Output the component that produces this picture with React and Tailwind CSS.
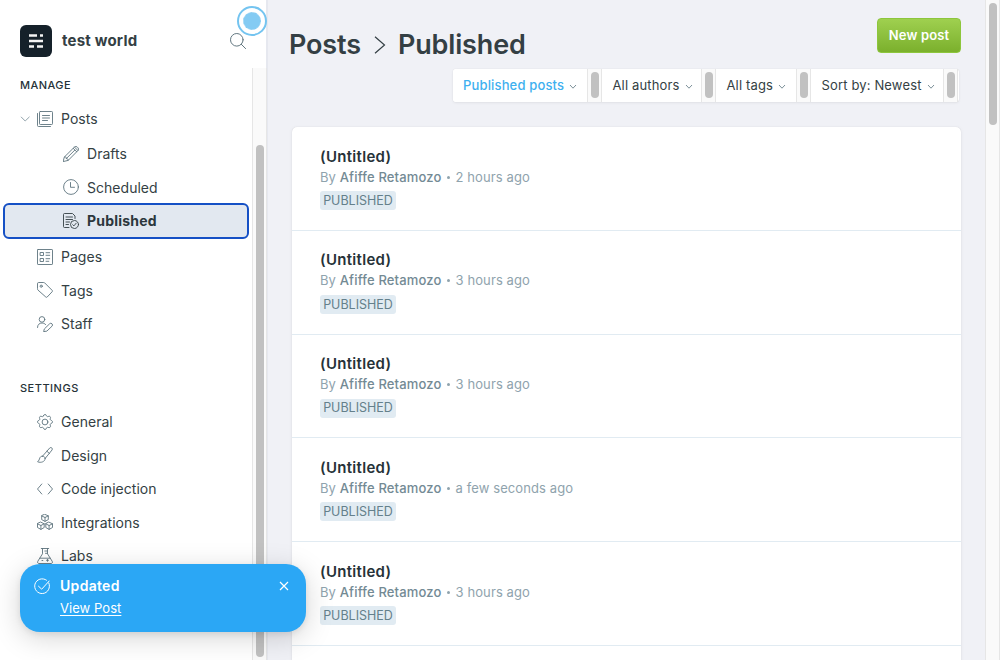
import React from 'react';

function Icon({ children, size = 'size-4', className = 'text-[#5d747e]', sw = 0.9 }) {
  return (
    <svg
      viewBox="0 0 16 16"
      className={`${size} shrink-0 ${className}`}
      fill="none"
      stroke="currentColor"
      strokeWidth={sw}
      strokeLinecap="round"
      strokeLinejoin="round"
    >
      {children}
    </svg>
  );
}

const icons = {
  posts: (
    <>
      <rect x="2.5" y="0.5" width="13" height="13" rx="0.8" />
      <path d="M0.5 2.5v12a1 1 0 0 0 1 1h12M5.5 4.5h7M5.5 7h7M5.5 9.500h5" />
    </>
  ),
  drafts: (
    <>
      <path d="M1.6 10.8 11.4 1.1a2 2 0 0 1 2.9 0l.6.6a2 2 0 0 1 0 2.9L5.2 14.4.5 15.5z" />
      <path d="m10.2 2.3 3.5 3.5M11.5 1.1l3.5 3.5M1.6 10.8c1.2-.2 1.9.5 1.7 1.8 1.2-.2 2 .6 1.9 1.8M3.3 12.6l8.4-8.4" />
    </>
  ),
  scheduled: (
    <>
      <circle cx="8" cy="8" r="7.4" />
      <path d="M7.5 3.5v4.8h4" />
    </>
  ),
  published: (
    <>
      <path d="M6 14.500H1.500a1 1 0 0 1-1-1v-12a1 1 0 0 1 1-1h8l2.500 2.500V5.500M3 4h6.500M3 6.500h6.500M3 9h3.500M3 11.500h2.500" />
      <circle cx="11.500" cy="11.500" r="4" />
      <path d="m9.700 11.700 1.200 1.200 2.300-2.700" />
    </>
  ),
  pages: (
    <>
      <rect x="0.5" y="0.5" width="15" height="15" rx="0.6" />
      <path d="M3.500 3.500h3v3h-3zM3.500 9.500h3v3h-3zM9 3.700h3.700M9 6.300h3.700M9 9.700h3.700M9 12.300h2.800" />
    </>
  ),
  tags: (
    <>
      <path d="M.5 1.500a1 1 0 0 1 1-1h5.200a1.500 1.500 0 0 1 1 .4l7.500 7.500a1 1 0 0 1 0 1.300l-5 5.300a1 1 0 0 1-1.400 0L.9 8a1.400 1.400 0 0 1-.4-1z" />
      <circle cx="4.200" cy="4.200" r="1.100" />
    </>
  ),
  staff: (
    <>
      <circle cx="5" cy="3.400" r="2.800" />
      <path d="M.5 11.500C.5 8.500 2.500 7 5 7c1.700 0 2.900.6 3.700 1.700M7.600 12.700l5-4.900a1.650 1.650 0 0 1 2.400 2.400l-5.100 4.900-2.900.5z" />
    </>
  ),
  general: (
    <>
      <path d="M6.500 1.800C6.800.9 7.200.5 8 .5s1.200.4 1.500 1.300c.3.700.9 1 1.600.7.900-.4 1.500-.4 2 .1s.6 1.200.2 2c-.3.700 0 1.400.7 1.700.9.300 1.500.8 1.500 1.600s-.5 1.300-1.400 1.600c-.8.300-1.100 1-.8 1.700.4.900.3 1.500-.2 2s-1.200.6-2 .2c-.7-.3-1.400 0-1.600.7-.3.900-.7 1.400-1.500 1.400s-1.200-.5-1.500-1.400c-.3-.7-.9-1-1.600-.7-.9.400-1.500.3-2-.2s-.6-1.100-.2-2c.3-.700 0-1.400-.7-1.700C1 9.200.5 8.700.5 7.900s.5-1.300 1.400-1.600c.8-.300 1.100-1 .8-1.700-.4-.800-.3-1.500.2-2s1.100-.5 2-.1c.700.300 1.300 0 1.600-.7z" />
      <circle cx="8" cy="8" r="2.900" />
    </>
  ),
  design: (
    <>
      <path d="M5.500 9.200 12.800.900c1.300-1.200 3.200.5 2.300 2L8.200 11.400" />
      <path d="M5.500 9.200c1.600 0 2.700 1 2.700 2.200M10 4.300l2.500 2.200M5.500 9.200C2 8.800 3.300 12.700.6 14.800c3.300 1.300 7.600.1 7.600-3.400" />
    </>
  ),
  code: <path d="M4.800 3 .5 8l4.300 5M11.200 3l4.300 5-4.300 5" />,
  integrations: (
    <>
      <path d="m8 .4 3.300 1.500v3.700L8 7.400 4.700 5.600V1.900zM4.700 1.900 8 3.500l3.300-1.600M8 3.500v3.900" />
      <path d="m3.900 8.200 3.300 1.600v3.700l-3.300 1.900-3.400-1.900V9.800zM.5 9.800l3.400 1.700 3.300-1.700M3.900 11.500v3.900" />
      <path d="m12.100 8.200 3.400 1.600v3.700l-3.400 1.900-3.300-1.900V9.800zM8.800 9.800l3.300 1.700 3.400-1.700M12.100 11.500v3.900" />
    </>
  ),
  labs: (
    <>
      <path d="M4.300.5h7.400M5.500.5v5.300L.8 13.300c-.700 1.200 0 2.200 1.200 2.200h12c1.200 0 1.900-1 1.200-2.200l-4.700-7.500V.5M2.900 10.200h10.200M7.800 3h2.500M8.500 5.300h2" />
      <path d="M5 12.500h.8M9.500 12.300h2M10.500 11.400v1.900" />
    </>
  ),
};

function NavItem({ icon, label, chevron, nested }) {
  return (
    <a className={`flex h-[33.6px] items-center gap-2 ${nested ? 'pl-[63px]' : chevron ? 'pl-5' : 'pl-[37px]'}`}>
      {chevron && (
        <svg viewBox="0 0 10 6" className="-mr-[1px] h-1.5 w-2.5 shrink-0 fill-none stroke-[#90a2aa]">
          <path d="M1 .8 5.200 5 9.500.8" />
        </svg>
      )}
      <Icon>{icons[icon]}</Icon>
      <span>{label}</span>
    </a>
  );
}

function Track({ className, thumb }) {
  return (
    <div className={`shrink-0 border-x border-[#e6e6e6] bg-[#fafafa] px-[3px] ${className}`}>
      <div className={`w-2 rounded-full bg-[#c1c1c1] ${thumb}`} />
    </div>
  );
}

function Filter({ label, active, width }) {
  return (
    <div className="flex h-[33px]">
      <div className={`flex items-center gap-[5px] bg-white ${width} ${active ? 'rounded-l-[3px] pl-2.5 text-[#3eb0ef] font-medium' : 'pl-[10.500px]'}`}>
        <span className="whitespace-nowrap">{label}</span>
        <svg viewBox="0 0 8 6" className="mt-0.5 h-1.5 w-2 shrink-0 fill-none stroke-[#7c9099]">
          <path d="M1 1l3 3.200L7 1" />
        </svg>
      </div>
      <Track className="w-[15px] pt-[3px]" thumb="h-[26px]" />
    </div>
  );
}

function Post({ time }) {
  return (
    <article className="h-[103.700px] border-b border-[#e1ebf2] pt-[19.500px] pl-7">
      <h3 className="text-[15px] leading-5 font-semibold tracking-[0.3px] text-[#263238]">(Untitled)</h3>
      <p className="mt-px text-[13px] leading-[18px] tracking-[0.1px] text-[#8fa3ad]">
        By <span className="font-medium tracking-[0.16px] text-[#738a94]">Afiffe Retamozo</span>
        <span className="mr-[6px] ml-[5px] inline-block size-[3px] rounded-full bg-[#8fa3ad] align-[3px]" />
        {time}
      </p>
      <span className="mt-[5.500px] flex h-[19px] w-[76px] items-center justify-center rounded-[3px] bg-[#e1ebf2] pt-px text-[12.500px] text-[#64808b]">
        PUBLISHED
      </span>
    </article>
  );
}

export default function App() {
  return (
    <div className="relative flex h-[660px] w-[1000px] overflow-hidden bg-[#f0f1f6] font-['Inter',sans-serif] text-[#343f44]">
      <aside className="flex w-[268px] shrink-0 flex-col border-r-2 border-[#e6e8ef] bg-white">
        <header className="flex h-[68px] shrink-0 items-center pt-[14px] pl-5">
          <svg viewBox="0 0 32 32" className="size-8 shrink-0">
            <rect width="32" height="32" rx="6" fill="#15212a" />
            <path d="M9 10.500h8M20 10.500h3M9 16h14M9 21.500h5M17 21.500h6" stroke="#f4f4f4" strokeWidth="2.600" />
          </svg>
          <h2 className="ml-2.5 w-[168px] text-[15px] font-bold tracking-[0.2px]">test world</h2>
          <Icon sw="1" className="text-[#627780]">
            <circle cx="6.800" cy="6.800" r="6.300" />
            <path d="m11.300 11.300 4.300 4.300" />
          </Icon>
        </header>
        <div className="flex min-h-0 flex-1">
          <nav className="w-[252px] shrink-0 overflow-hidden text-[14px] tracking-[0.03px]">
            <h4 className="flex h-[34px] items-center pl-5 text-[11px] font-medium tracking-[0.45px] text-[#263238]">MANAGE</h4>
            <NavItem icon="posts" label="Posts" chevron />
            <div className="mt-[1.500px]">
              <NavItem icon="drafts" label="Drafts" nested />
              <NavItem icon="scheduled" label="Scheduled" nested />
            </div>
            <a className="mx-[3px] -mt-[1.300px] flex h-9 w-[246px] items-center gap-2 rounded-md border-2 border-[#1550c5] bg-[#e2e8f0] pl-[58px] font-bold tracking-[0.2px] text-[#2c373d]">
              <Icon className="text-[#343f44]">{icons.published}</Icon>
              <span>Published</span>
            </a>
            <div className="mt-px">
              <NavItem icon="pages" label="Pages" />
              <NavItem icon="tags" label="Tags" />
              <NavItem icon="staff" label="Staff" />
            </div>
            <h4 className="mt-[30px] flex h-[34px] items-center pl-5 text-[11px] font-medium tracking-[0.5px] text-[#263238]">SETTINGS</h4>
            <NavItem icon="general" label="General" />
            <NavItem icon="design" label="Design" />
            <NavItem icon="code" label="Code injection" />
            <NavItem icon="integrations" label="Integrations" />
            <NavItem icon="labs" label="Labs" />
          </nav>
          <Track className="w-[15px] pt-[77px]" thumb="h-[512px]" />
        </div>
      </aside>

      <main className="flex min-w-0 flex-1 flex-col pl-[23px]">
        <div className="flex h-[69px] shrink-0">
          <h1 className="mt-[27px] ml-[-2px] flex h-9 flex-1 items-center text-[27px] font-semibold tracking-[-0.15px]">
            Posts
            <svg viewBox="0 0 12 18" className="mr-[12px] ml-[13px] h-[18px] w-3 fill-none stroke-[#343f44]">
              <path d="m1 .8 9.500 8.200L1 17.200" strokeWidth="1.200" />
            </svg>
            Published
          </h1>
          <button className="mt-[18px] mr-6 h-[35px] w-[84px] rounded-[4px] border border-[#8dc63c] bg-linear-to-b from-[#9fd04f] to-[#7bb02c] text-[13px] font-semibold tracking-[0.15px] text-white">
            New post
          </button>
        </div>
        <div className="ml-[162px] flex h-[33px] w-[506px] shrink-0 rounded-[3px] bg-white text-[13px] tracking-[0.15px] shadow-[0_0_1px_rgba(0,0,0,.15),0_1px_3px_rgba(0,0,0,.06)]">
          <Filter label="Published posts" active width="w-[134px]" />
          <Filter label="All authors" width="w-[99px]" />
          <Filter label="All tags" width="w-[80px]" />
          <Filter label="Sort by: Newest" width="w-[132px]" />
        </div>
        <section className="mt-[25.300px] ml-[1px] h-[600px] w-[669px] shrink-0 rounded-[5px] bg-white shadow-[0_0_1px_rgba(0,0,0,.15),0_1px_4px_rgba(0,0,0,.06)]">
          <Post time="2 hours ago" />
          <Post time="3 hours ago" />
          <Post time="3 hours ago" />
          <Post time="a few seconds ago" />
          <Post time="3 hours ago" />
        </section>
      </main>
      <Track className="w-[15px] pt-[3px]" thumb="h-[122px]" />

      <div className="absolute top-[6px] left-[237px] flex size-[30px] items-center justify-center rounded-full border-2 border-[#74c4f0] bg-white">
        <div className="size-[18px] rounded-full border border-dashed border-[#a4d8f5] bg-[#84cbf3]" />
      </div>

      <div className="absolute top-[564px] left-5 flex h-[68px] w-[286px] rounded-[20px] bg-[#2ba7f5] pt-3.5 pl-3.5 text-white shadow-[0_6px_28px_rgba(0,0,0,.17),0_2px_6px_rgba(0,0,0,.08)]">
        <Icon className="text-white" sw="1">
          <path d="M14.800 5A7.400 7.400 0 1 1 12.500 2.200M4.500 8.200l3.200 3 7.500-8.200" />
        </Icon>
        <div className="ml-2.5 flex-1">
          <div className="-mt-0.5 text-[14px] leading-5 font-semibold tracking-[0.3px]">Updated</div>
          <a className="mt-[3px] block text-[13px] leading-[18px] tracking-[0.05px] underline underline-offset-2">View Post</a>
        </div>
        <svg viewBox="0 0 10 10" className="mt-[3px] mr-[17px] size-2.5 fill-none stroke-white">
          <path d="m1 1 8 8M9 1 1 9" strokeWidth="1.200" />
        </svg>
      </div>
    </div>
  );
}
